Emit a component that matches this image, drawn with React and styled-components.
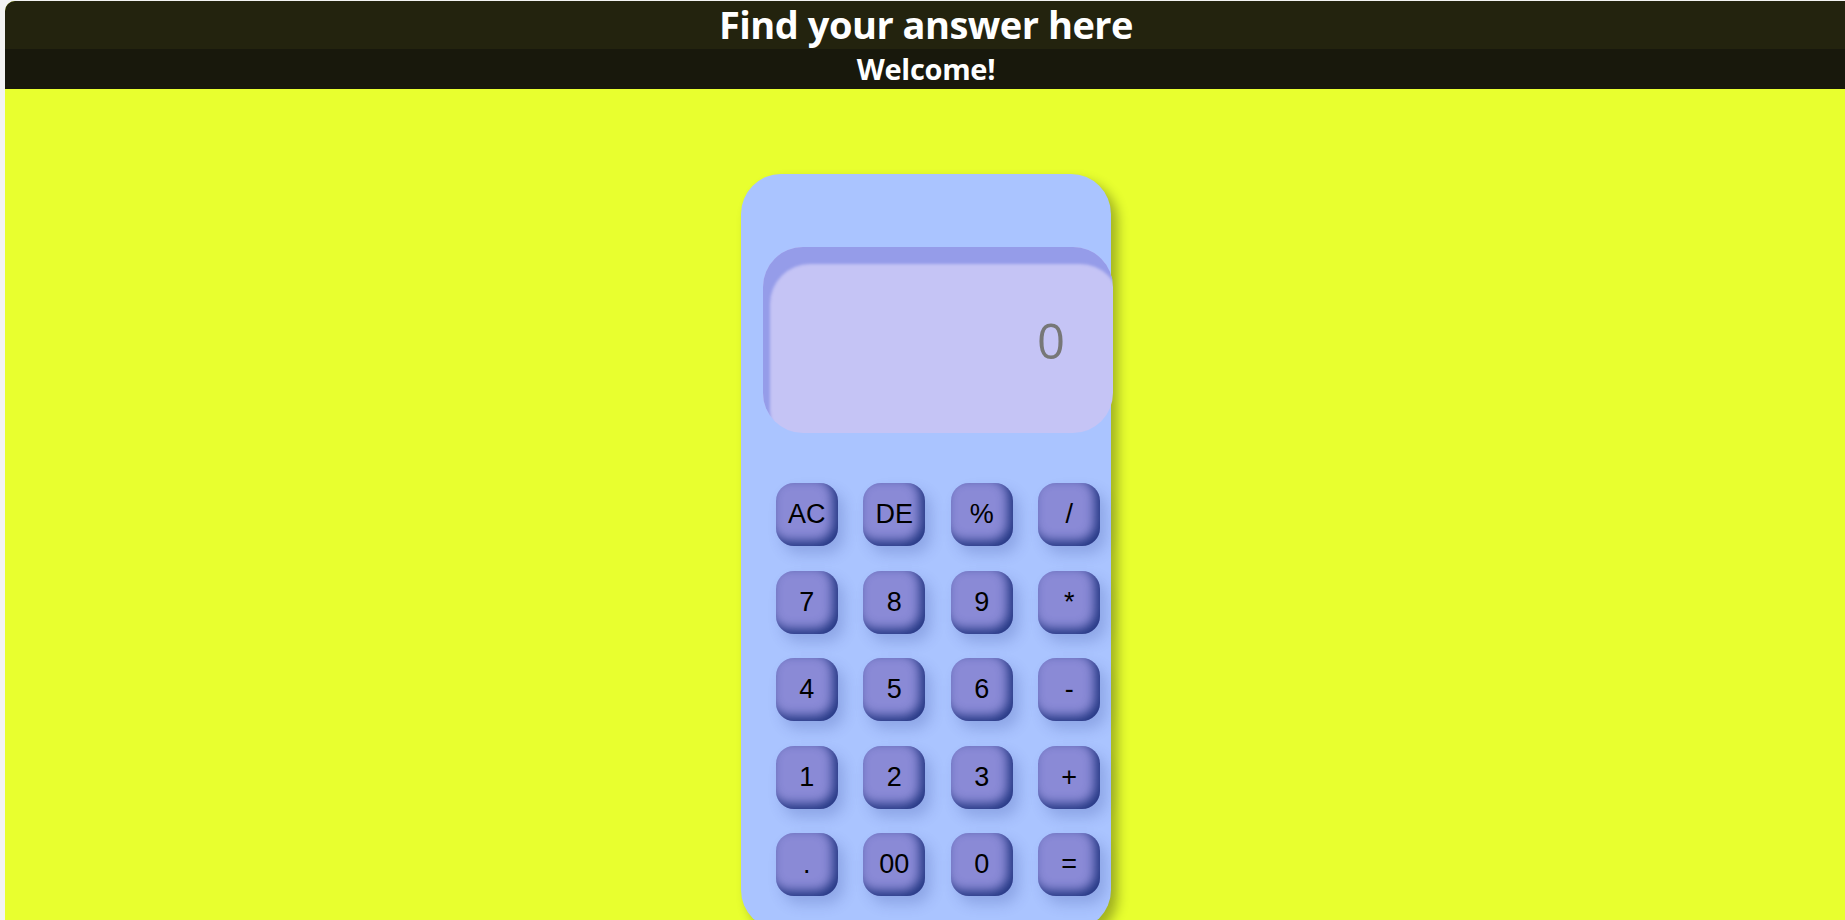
import React from 'react';
import styled, { createGlobalStyle } from 'styled-components';

const GlobalStyle = createGlobalStyle`
    html, body {
        margin: 0;
        padding: 0;
        background: #f3f3f3;
        overflow: hidden;
    }
`

const Page = styled.div`
    margin: 1px 0 0 5px;
    width: 1842px;
    min-height: 919px;
    background: #e8ff2f;
    border-top-left-radius: 10px;
    overflow: hidden;
`

const TitleBar = styled.header`
    height: 48px;
    background: #23230e;
    color: #fff;
    display: flex;
    align-items: center;
    justify-content: center;
    font-family: "Open Sans", sans-serif;
    font-weight: 700;
    font-size: 38px;
    line-height: 1.2;
    letter-spacing: -0.5px;
`

const WelcomeBar = styled.div`
    height: 40px;
    background: #18180c;
    color: #fff;
    display: flex;
    align-items: center;
    justify-content: center;
    font-family: "Open Sans", sans-serif;
    font-weight: 700;
    font-size: 29px;
    line-height: 1.2;
    letter-spacing: -0.3px;
`

const Main = styled.main`
    display: flex;
    justify-content: center;
    padding-top: 85px;
`

const Calculator = styled.div`
    width: 370px;
    height: 756px;
    box-sizing: border-box;
    padding: 73px 0 0 22px;
    background: #aac4ff;
    border-radius: 40px;
    box-shadow: 7px 7px 12px rgba(0, 0, 0, 0.3);
`

const Screen = styled.div`
    width: 350px;
    height: 186px;
    box-sizing: border-box;
    padding: 0 48px 0 0;
    border-radius: 40px;
    background: #c5c4f5;
    box-shadow: inset 7px 17px 3px #959ce9;
    display: flex;
    align-items: center;
    justify-content: flex-end;
    font-family: "Open Sans", sans-serif;
    font-size: 49px;
    color: #777;
`

const Keys = styled.div`
    margin-top: 38px;
    display: grid;
    grid-template-columns: repeat(4, 87.5px);
    grid-auto-rows: 87.5px;
    place-items: center;
`

const Key = styled.button`
    width: 62px;
    height: 63px;
    border: none;
    border-radius: 18px;
    background: #8a8ad6;
    box-shadow: inset -5px -5px 11px #223682, 6px 8px 14px rgba(40, 60, 140, 0.22);
    font-family: "Liberation Sans", Arial, sans-serif;
    font-size: 27px;
    color: #000;
    padding: 0;
    cursor: pointer;
`

const keys = ['AC', 'DE', '%', '/', '7', '8', '9', '*', '4', '5', '6', '-', '1', '2', '3', '+', '.', '00', '0', '='];

const App = () => {
    return(
        <Page>
            <GlobalStyle />
            <TitleBar>Find your answer here</TitleBar>
            <WelcomeBar>Welcome!</WelcomeBar>
            <Main>
                <Calculator>
                    <Screen>0</Screen>
                    <Keys>
                        {keys.map(k => <Key key={k}>{k}</Key>)}
                    </Keys>
                </Calculator>
            </Main>
        </Page>
    )
}

export default App;
